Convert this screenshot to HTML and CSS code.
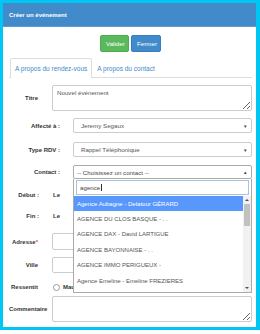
FILE: index.html
```html
<!DOCTYPE html>
<html lang="fr">
<head>
    <meta charset="UTF-8">
    <title>Créer un événement</title>
    <link rel="stylesheet" href="styles.css">
</head>
<body>
    <div class="modal">
        <div class="modal-header">Créer un événement</div>
        <div class="modal-body">
            <div class="actions">
                <button type="button" class="btn btn-success">Valider</button>
                <button type="button" class="btn btn-primary">Fermer</button>
            </div>

            <ul class="tabs">
                <li class="active">A propos du rendez-vous</li>
                <li>A propos du contact</li>
            </ul>

            <div class="form">
                <div class="row row-titre">
                    <label class="lbl">Titre</label>
                    <textarea class="control area">Nouvel événement</textarea>
                </div>
                <div class="row row-affecte wide">
                    <label class="lbl">Affecté à :</label>
                    <div class="control select">Jeremy Segaux<span class="caret">▾</span></div>
                </div>
                <div class="row row-type wide">
                    <label class="lbl">Type RDV :</label>
                    <div class="control select">Rappel Téléphonique<span class="caret">▾</span></div>
                </div>
                <div class="row row-contact wide">
                    <label class="lbl">Contact :</label>
                    <div class="select-wrap">
                        <div class="control select open">-- Choisissez un contact --<span class="caret">▴</span></div>
                        <div class="dropdown">
                            <div class="search">agence <span class="cursor"></span></div>
                            <div class="results">
                                <ul class="options">
                                    <li class="hl">Agence Aubagne - Delatour GÉRARD</li>
                                    <li>AGENCE DU CLOS BASQUE - . .</li>
                                    <li>AGENCE DAX - David LARTIGUE</li>
                                    <li>AGENCE BAYONNAISE - . .</li>
                                    <li>AGENCE IMMO PERIGUEUX -</li>
                                    <li>Agence Emeline - Emeline FREZIERES</li>
                                </ul>
                                <div class="scrollbar">
                                    <span class="arrow up"></span>
                                    <span class="thumb"></span>
                                    <span class="arrow down"></span>
                                </div>
                            </div>
                        </div>
                    </div>
                </div>
                <div class="row row-debut date">
                    <label class="lbl">Début :</label>
                    <span class="le">Le</span>
                </div>
                <div class="row row-fin date">
                    <label class="lbl">Fin :</label>
                    <span class="le">Le</span>
                </div>
                <div class="row row-adresse">
                    <label class="lbl">Adresse<span class="req">*</span></label>
                    <div class="control input"></div>
                </div>
                <div class="row row-ville">
                    <label class="lbl">Ville</label>
                    <div class="control input"></div>
                </div>
                <div class="row row-ressenti">
                    <label class="lbl">Ressentit</label>
                    <span class="radio"></span>
                    <span class="radio-text">Mauvais</span>
                </div>
                <div class="row row-comment">
                    <label class="lbl lbl-long">Commentaire</label>
                    <textarea class="control area"></textarea>
                </div>
            </div>
        </div>
    </div>
</body>
</html>
```

FILE: styles.css
```css
body {
    margin: 0;
    background-color: #ffffff;
    font-family: "Liberation Sans", Arial, sans-serif;
    font-size: 6.2px;
    color: #555;
}

.modal {
    width: 260px;
    height: 330px;
    box-sizing: border-box;
    border: 3px solid #00c6f3;
    border-right-width: 4px;
    background-color: #ffffff;
}

.modal-header {
    height: 24px;
    padding: 0 6px;
    display: flex;
    align-items: center;
    background-color: #428bca;
    border-bottom: 1px solid #5d9bd2;
    box-sizing: border-box;
    color: #ffffff;
    font-weight: bold;
    font-size: 6px;
}

.modal-body {
    padding: 0 4px 0 6px;
}

.actions {
    display: flex;
    justify-content: center;
    gap: 2px;
    margin-top: 8px;
}

.btn {
    height: 17px;
    padding: 0 5px;
    border: 1px solid transparent;
    border-radius: 2px;
    color: #ffffff;
    font-family: inherit;
    font-size: 6.2px;
}

.btn-success {
    width: 29px;
    background-color: #5cb85c;
    border-color: #4cae4c;
}

.btn-primary {
    width: 30px;
    background-color: #428bca;
    border-color: #357ebd;
}

.tabs {
    display: flex;
    list-style: none;
    margin: 6px 0 0 0;
    padding: 0;
    height: 20px;
    border-bottom: 1px solid #ddd;
    box-sizing: border-box;
}

.tabs li {
    padding: 0 4px;
    display: flex;
    align-items: center;
    color: #428bca;
    font-size: 6.5px;
    border: 1px solid transparent;
    border-bottom: none;
}

.tabs li.active {
    margin-left: 1px;
    margin-bottom: -1px;
    background-color: #ffffff;
    border-color: #ddd;
    border-radius: 2px 2px 0 0;
}

.form {
    display: flex;
    flex-direction: column;
}

.row {
    display: flex;
    align-items: center;
    gap: 14px;
}

.lbl {
    width: 29px;
    flex-shrink: 0;
    text-align: right;
    font-weight: bold;
    font-size: 6px;
    color: #333;
    white-space: nowrap;
}

.lbl-long {
    text-align: left;
}

.req {
    color: #d9534f;
}

.wide {
    gap: 13px;
}

.wide .lbl {
    width: 51px;
}

.date .lbl {
    width: 30px;
}

.le {
    font-weight: bold;
    font-size: 6px;
    color: #333;
}

.control {
    flex: 1;
    box-sizing: border-box;
    border: 1px solid #ccc;
    border-radius: 2px;
    background-color: #ffffff;
    color: #555;
    font-family: inherit;
    font-size: 6.2px;
}

.area {
    height: 26px;
    padding: 3px 4px;
    margin: 0;
}

.select {
    height: 100%;
    padding: 0 4px 0 7px;
    display: flex;
    align-items: center;
    justify-content: space-between;
}

.caret {
    font-size: 5px;
    color: #333;
}

.input {
    height: 100%;
}

.row-titre { margin-top: 7px; }
.row-affecte { margin-top: 7px; height: 15px; }
.row-type { margin-top: 9px; height: 15px; }
.row-contact { margin-top: 8px; height: 14px; }
.row-debut { margin-top: 8px; height: 15px; }
.row-fin { margin-top: 6px; height: 15px; }
.row-adresse { margin-top: 10px; height: 17px; }
.row-ville { margin-top: 7px; height: 16px; }
.row-ressenti { margin-top: 7px; height: 14px; }
.row-comment { margin-top: 2px; }

.row-ressenti {
    gap: 0;
}

.radio {
    width: 5px;
    height: 5px;
    margin-left: 15px;
    border: 1px solid #999;
    border-radius: 50%;
}

.radio-text {
    margin-left: 3px;
    font-weight: bold;
    font-size: 6px;
    color: #333;
}

.select-wrap {
    flex: 1;
    height: 100%;
    display: flex;
    position: relative;
}

.select.open {
    border-color: #aaa;
    color: #444;
    padding-left: 3px;
}

.dropdown {
    position: absolute;
    top: 100%;
    left: 0;
    right: 0;
    z-index: 10;
    background-color: #ffffff;
    border: 1px solid #aaa;
    border-top: none;
    padding-top: 1px;
}

.search {
    height: 15px;
    margin: 0 2px;
    padding: 0 3px;
    box-sizing: border-box;
    border: 1px solid #a6c3e6;
    display: flex;
    align-items: center;
    color: #444;
}

.cursor {
    width: 1px;
    height: 7px;
    background-color: #333;
    margin-left: 1px;
}

.results {
    display: flex;
    height: 96px;
    margin-top: 1px;
    overflow: hidden;
}

.options {
    flex: 1;
    list-style: none;
    margin: 0;
    padding: 0;
}

.options li {
    height: 15.4px;
    padding-left: 3px;
    display: flex;
    align-items: center;
    font-size: 6px;
    color: #555;
    white-space: nowrap;
}

.options li.hl {
    background-color: #5897fb;
    color: #ffffff;
}

.scrollbar {
    width: 8px;
    display: flex;
    flex-direction: column;
    align-items: center;
    background-color: #f1f1f1;
}

.arrow {
    width: 0;
    height: 0;
    margin: 3px 0;
    border-left: 2px solid transparent;
    border-right: 2px solid transparent;
}

.arrow.up {
    border-bottom: 2px solid #505050;
}

.arrow.down {
    margin-top: auto;
    border-top: 2px solid #505050;
}

.thumb {
    width: 6px;
    height: 22px;
    background-color: #c1c1c1;
}
```
